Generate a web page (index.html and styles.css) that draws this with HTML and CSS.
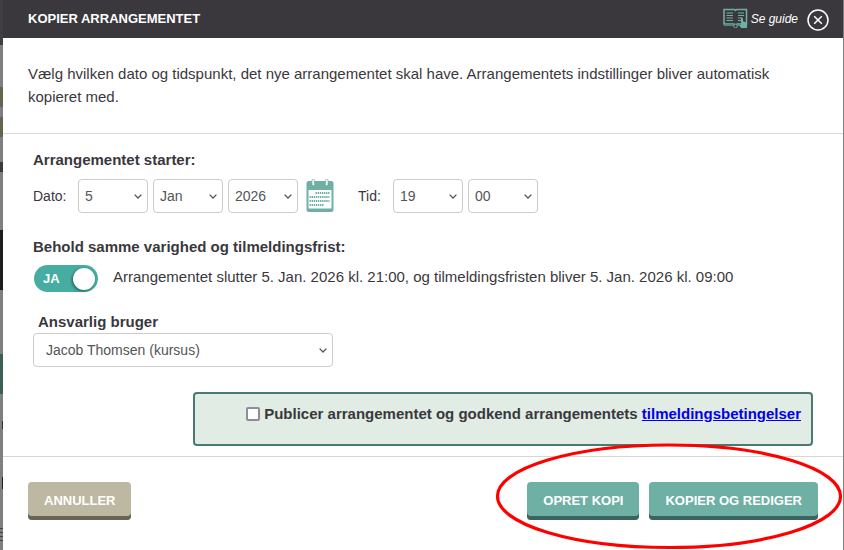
FILE: index.html
```html
<!DOCTYPE html>
<html lang="da">
<head>
<meta charset="utf-8">
<title>Kopier arrangementet</title>
<link rel="stylesheet" href="styles.css">
</head>
<body>
<div class="backdrop">
  <i class="bd bd1"></i><i class="bd bd2"></i><i class="bd bd2b"></i><i class="bd bd6"></i><i class="bd bd3"></i><i class="bd bd4"></i><i class="bd bd7"></i><i class="bd bd5"></i><i class="bd bd8"></i>
</div>
<main class="modal">
  <header class="head">
    <h1 class="title">KOPIER ARRANGEMENTET</h1>
    <div class="head-tools">
      <svg class="guide-icon" width="25" height="20" viewBox="0 0 25 20" aria-hidden="true">
        <path d="M1 1.500h10.500l1 1 1-1H23.500v14.500H14l-1.500 1.500-1.500-1.500H1z" fill="#3a383d" stroke="#6fb0a5" stroke-width="1.500"/>
        <path d="M3.500 5h6.500M3.500 7.500h6.500M3.500 10h6.500M3.500 12.500h6.500M15 5h6M15 7.500h6M15 10h4M15 12.500h3" stroke="#6fb0a5" stroke-width="1"/>
        <rect x="1" y="16" width="22" height="2" fill="#4d8a80"/>
        <path d="M18 9.500l1.700 0 .5 4 3.800 1V20h-6l-2-3.500 2 .5z" fill="#6fb0a5"/>
        <circle cx="12.500" cy="18" r="1.800" fill="#3a383d" stroke="#6fb0a5"/>
      </svg>
      <span class="guide-text">Se guide</span>
      <svg class="close-icon" width="22" height="22" viewBox="0 0 22 22" aria-hidden="true">
        <circle cx="11" cy="11" r="10" fill="none" stroke="#fff" stroke-width="1.500"/>
        <path d="M7.200 7.200l7.600 7.600M14.800 7.200l-7.600 7.600" stroke="#fff" stroke-width="1.500"/>
      </svg>
    </div>
  </header>

  <section class="intro">
    <p>Vælg hvilken dato og tidspunkt, det nye arrangementet skal have. Arrangementets indstillinger bliver automatisk kopieret med.</p>
  </section>

  <section class="form">
    <h2 class="label">Arrangementet starter:</h2>
    <div class="date-row">
      <span class="field-label">Dato:</span>
      <select class="select s70" aria-label="Dag"><option>5</option></select>
      <select class="select s70" aria-label="Måned"><option>Jan</option></select>
      <select class="select s70" aria-label="År"><option>2026</option></select>
      <svg class="cal" width="28" height="34" viewBox="0 0 28 34" aria-hidden="true">
        <rect x="0.500" y="2" width="27" height="31" rx="2.500" fill="#6fb0a5"/>
        <rect x="2.500" y="11" width="23" height="18.500" fill="#fff"/>
        <rect x="6" y="0.500" width="2.500" height="6" rx="1" fill="#fff" stroke="#6fb0a5" stroke-width=".8"/>
        <rect x="19.500" y="0.500" width="2.500" height="6" rx="1" fill="#fff" stroke="#6fb0a5" stroke-width=".8"/>
        <path d="M9.500 14h14M3.500 18h20M3.500 22h20M3.500 26h14" stroke="#6fb0a5" stroke-width="2" stroke-dasharray="1.400 .7"/>
      </svg>
      <span class="field-label tid">Tid:</span>
      <select class="select s70" aria-label="Time"><option>19</option></select>
      <select class="select s70" aria-label="Minut"><option>00</option></select>
    </div>

    <h2 class="label second">Behold samme varighed og tilmeldingsfrist:</h2>
    <div class="toggle-row">
      <span class="toggle"><span class="toggle-text">JA</span><span class="knob"></span></span>
      <span class="toggle-desc">Arrangementet slutter 5. Jan. 2026 kl. 21:00, og tilmeldingsfristen bliver 5. Jan. 2026 kl. 09:00</span>
    </div>

    <h2 class="label third">Ansvarlig bruger</h2>
    <select class="select wide" aria-label="Ansvarlig bruger"><option>Jacob Thomsen (kursus)</option></select>

    <div class="publish-wrap">
      <div class="publish">
        <span class="check"></span>
        <span>Publicer arrangementet og godkend arrangementets <a href="#">tilmeldingsbetingelser</a></span>
      </div>
    </div>
  </section>

  <footer class="foot">
    <button class="btn cancel" type="button">ANNULLER</button>
    <div class="foot-right">
      <button class="btn primary" type="button">OPRET KOPI</button>
      <button class="btn primary" type="button">KOPIER OG REDIGER</button>
    </div>
  </footer>
</main>
<svg class="ring" width="350" height="108" viewBox="0 0 350 108" aria-hidden="true">
  <ellipse cx="174" cy="53.250" rx="171.500" ry="51.250" fill="none" stroke="#f00" stroke-width="3.200"/>
</svg>
</body>
</html>
```
FILE: styles.css
```css
* { box-sizing: border-box; }
html, body { margin: 0; padding: 0; }
body {
  width: 844px;
  height: 550px;
  overflow: hidden;
  position: relative;
  background: #7f7f7f;
  font-family: "Liberation Sans", Arial, sans-serif;
  color: #3a383d;
  font-size: 15px;
}
.backdrop { position: absolute; left: 0; top: 0; width: 3px; height: 550px; }
.bd { position: absolute; left: 0; width: 3px; display: block; }
.bd1 { top: 0; height: 45px; background: #3f3f42; }
.bd2 { top: 87px; height: 20px; background: #66634f; }
.bd2b { top: 117px; height: 20px; background: #66634f; }
.bd6 { top: 162px; height: 10px; background: #3a3a3a; }
.bd3 { top: 230px; height: 60px; background: #1d1d1d; }
.bd4 { top: 354px; height: 40px; background: #3b6058; }
.bd7 { top: 421px; height: 8px; left: 2px; width: 1px; background: #333; }
.bd5 { top: 477px; height: 12px; left: 2px; width: 1px; background: #222; }
.bd8 { top: 528px; height: 14px; background: repeating-linear-gradient(#444 0 1px, #7f7f7f 1px 4px); }
.modal {
  position: absolute;
  left: 3px;
  top: 0;
  width: 840px;
  height: 550px;
  background: #fff;
  display: flex;
  flex-direction: column;
}
.head {
  height: 38px;
  flex: none;
  background: #3a383d;
  display: flex;
  align-items: center;
  justify-content: space-between;
  padding: 0 14px 0 25px;
}
.title { margin: 0 0 2px; font-size: 13px; font-weight: 700; color: #fff; line-height: 1; }
.head-tools { display: flex; align-items: center; }
.guide-icon { margin-right: 3px; margin-bottom: 2px; }
.guide-text { font-size: 12px; font-style: italic; color: #fff; margin-right: 9px; }
.close-icon { display: block; margin-top: 2px; }
.intro { height: 96px; flex: none; padding: 24px 25px 0; border-bottom: 1px solid #d9d9d0; }
.intro p { margin: 0; line-height: 23px; }
.form { flex: none; height: 323px; padding: 16px 30px 0; border-bottom: 1px solid #d9d9d0; }
.label { margin: 0; font-size: 15px; font-weight: 700; line-height: 20px; color: #3a383d; }
.date-row { display: flex; align-items: center; margin-top: 9px; height: 34px; font-size: 14px; }
.field-label { width: 45px; flex: none; }
.tid { width: 35px; margin-left: 24px; }
.select {
  appearance: none;
  display: block;
  height: 34px;
  padding: 0 0 0 6px;
  margin: 0 5px 0 0;
  border: 1px solid #ccc;
  border-radius: 4px;
  background: #fff url("data:image/svg+xml,%3Csvg xmlns='http://www.w3.org/2000/svg' width='8' height='5'%3E%3Cpath d='M.6.6 4 4 7.400.6' fill='none' stroke='%23555' stroke-width='1.300'/%3E%3C/svg%3E") no-repeat right 5px center;
  color: #555;
  font: 14px "Liberation Sans", Arial, sans-serif;
  flex: none;
}
.s70 { width: 70px; }
.cal { margin-left: 3px; flex: none; }
.second { margin-top: 24px; }
.toggle-row { display: flex; align-items: center; margin-top: 7px; height: 29px; }
.toggle {
  width: 64px;
  height: 27px;
  margin-left: 1px;
  border-radius: 14px;
  background: #47ada3;
  position: relative;
  display: flex;
  align-items: center;
  flex: none;
}
.toggle-text { margin-left: 9px; color: #fff; font-size: 13px; font-weight: 700; }
.knob {
  position: absolute;
  right: 3px;
  top: 3px;
  width: 22px;
  height: 22px;
  border-radius: 50%;
  background: #fff;
  box-shadow: -1px 1px 3px rgba(0,0,0,.5);
}
.toggle-desc { margin-left: 15px; margin-bottom: 5px; }
.third { margin: 19px 0 0 5px; line-height: 20px; }
.wide { width: 300px; padding-left: 12px; margin: 1px 0 0; }
.publish-wrap { display: flex; justify-content: flex-end; margin-top: 25px; }
.publish {
  width: 620px;
  height: 54px;
  background: #e0ece4;
  border: 2px solid #4a7a72;
  border-radius: 4px;
  padding: 11px 10px 0 0;
  font-weight: 700;
  display: flex;
  justify-content: flex-end;
  align-items: flex-start;
  line-height: 18px;
}
.publish a { color: #00e; text-decoration: underline; }
.check {
  width: 14px;
  height: 14px;
  margin: 2px 4px 0 0;
  background: #fff;
  border: 2px solid #8f8d9c;
  border-radius: 2px;
  flex: none;
}
.foot {
  flex: 1;
  display: flex;
  justify-content: space-between;
  align-items: flex-start;
  padding: 25px 25px 0;
}
.foot-right { display: flex; gap: 10px; }
.btn {
  height: 38px;
  border: 0;
  border-radius: 4px;
  color: #fff;
  font: 700 13px "Liberation Sans", Arial, sans-serif;
  padding: 0 16px 2px;
}
.cancel { width: 103px; background: #bdb8a1; box-shadow: inset 0 -4px 0 #67645a; }
.primary { background: #6fb0a5; box-shadow: inset 0 -4px 0 #3b6460; }
.ring { position: absolute; left: 495px; top: 443px; pointer-events: none; }
```
